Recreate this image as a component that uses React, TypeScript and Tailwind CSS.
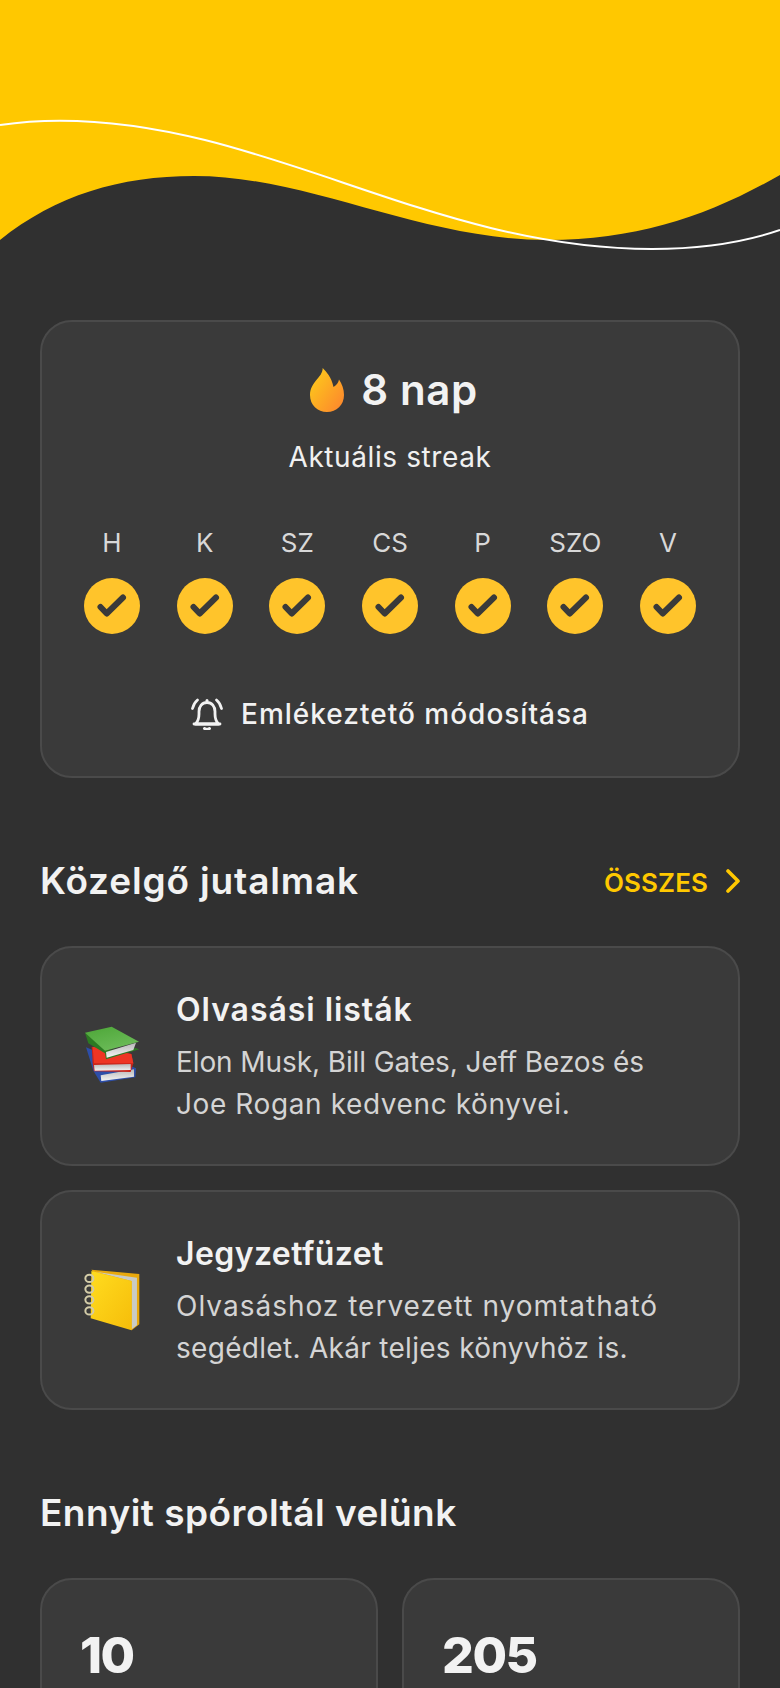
import React from "react";

const days = ["H", "K", "SZ", "CS", "P", "SZO", "V"];
const cardClass = "rounded-[32px] border-2 border-[#4a4a4a] bg-[#3a3a3a]";

function Wave() {
  return (
    <svg className="block h-[320px] w-[780px]" viewBox="0 0 780 320">
      <path d="M0 240C56 195 120 176 194 176C310 176 420 240 547 240C640 240 710 215 780 175L780 0L0 0Z" fill="#ffc800" />
      <path d="M0 125C20 122 40 120.7 60 120.7C265 120.7 430 249 652 249C700 249 745 242 780 230" fill="none" stroke="#ffffff" strokeWidth="2" />
    </svg>
  );
}

function Flame() {
  return (
    <svg width="34" height="44" viewBox="0 0 34 44" className="shrink-0">
      <defs>
        <linearGradient id="fl" x1="0.1" y1="0.2" x2="0.9" y2="0.9">
          <stop offset="0" stopColor="#fdc51c" />
          <stop offset="1" stopColor="#fd8a2c" />
        </linearGradient>
      </defs>
      <path d="M12.700 0C16 3.500 21.500 9 23.500 19C26.500 17 28.500 14.500 29 11.500C32 16 34 21 34 27C34 37 26.500 44 17 44C7.500 44 0 37 0 27C0 20 3.500 16 6 12.500C9.500 8.500 12.700 5 12.700 0Z" fill="url(#fl)" />
    </svg>
  );
}

function Check() {
  return (
    <div className="flex h-14 w-14 items-center justify-center rounded-full bg-[#ffc42b]">
      <svg width="56" height="56" viewBox="0 0 56 56">
        <path d="M16.500 29L22.700 35.500L39 19.500" fill="none" stroke="#3a3a3a" strokeWidth="6" strokeLinecap="round" strokeLinejoin="round" />
      </svg>
    </div>
  );
}

function Bell() {
  return (
    <svg width="32" height="32" viewBox="0 0 32 32" fill="none" stroke="#f2f2f2" strokeWidth="2.800" strokeLinecap="round" strokeLinejoin="round">
      <path d="M4.500 26C7 23.500 8 20.500 8 16V13.500C8 8.500 11 4.500 16 4.500C21 4.500 24 8.500 24 13.500V16C24 20.500 25 23.500 27.500 26Z" />
      <path d="M3 26H29" />
      <path d="M1.500 10.500C2.500 6.800 4 4 6.500 2" />
      <path d="M30.500 10.500C29.500 6.800 28 4 25.500 2" />
      <path d="M13.500 30.500C15 31.500 17 31.500 18.500 30.500" strokeWidth="3" />
      <circle cx="16" cy="2.500" r="1.500" fill="#f2f2f2" stroke="none" />
    </svg>
  );
}

function Books() {
  return (
    <svg width="56" height="60" viewBox="72 78 168 180" className="shrink-0">
      <defs>
        <linearGradient id="gr" x1="0.2" y1="0" x2="0.8" y2="1">
          <stop offset="0" stopColor="#4fa83a" />
          <stop offset="1" stopColor="#6fbd5c" />
        </linearGradient>
        <linearGradient id="pg" x1="0" y1="0" x2="0" y2="1">
          <stop offset="0" stopColor="#b8b8b8" />
          <stop offset="1" stopColor="#f4f4f4" />
        </linearGradient>
      </defs>
      <polygon points="78,142 228,205 226,232 122,248 100,212" fill="#2d4ea8" />
      <polygon points="122,226 222,208 222,230 124,243" fill="url(#pg)" />
      <polygon points="95,140 214,162 220,190 212,216 102,214 98,190" fill="#c9241a" />
      <polygon points="98,140 214,162 220,190 102,190" fill="#ee3524" />
      <polygon points="102,195 212,192 212,210 104,212" fill="url(#pg)" />
      <polygon points="85,130 135,160 138,178 238,148 226,144 140,150 75,98" fill="#2c7a22" />
      <polygon points="138,156 228,128 220,150 140,173" fill="url(#pg)" />
      <polygon points="75,98 155,80 237,125 135,152" fill="url(#gr)" />
    </svg>
  );
}

function Notebook() {
  return (
    <svg width="57" height="62" viewBox="70 60 170 185" className="shrink-0">
      <defs>
        <linearGradient id="nb" x1="0" y1="0" x2="1" y2="1">
          <stop offset="0" stopColor="#ffdc1f" />
          <stop offset="1" stopColor="#f6bd0a" />
        </linearGradient>
      </defs>
      <polygon points="92,62 235,75 235,225 212,243" fill="#e9a90d" />
      <polygon points="104,68 228,86 228,228 212,240 212,96" fill="#c9cbc4" />
      <polygon points="92,66 212,96 212,243 90,207" fill="url(#nb)" />
      {[88, 120, 152, 185].map((y) => (
        <ellipse key={y} cx="86" cy={y} rx="12" ry="11" fill="none" stroke="#d3cca8" strokeWidth="6" />
      ))}
    </svg>
  );
}

type Line = { text: string; cls: string };

function Reward({ icon, title, titleCls, lines }: { icon: React.ReactNode; title: string; titleCls: string; lines: Line[] }) {
  return (
    <div className={`flex h-[220px] items-center ${cardClass}`}>
      <div className="flex w-[134px] shrink-0 justify-start pl-[42px]">{icon}</div>
      <div className="pt-[2px]">
        <div className={`mb-[11px] text-[32px] leading-[40px] font-semibold text-[#f2f2f2] ${titleCls}`}>{title}</div>
        {lines.map((l) => (
          <div key={l.text} className={`text-[28px] leading-[42px] text-[#d4d4d4] ${l.cls}`}>{l.text}</div>
        ))}
      </div>
    </div>
  );
}

export default function App() {
  return (
    <div className="h-[1688px] w-[780px] overflow-hidden bg-[#303030] font-['Inter',sans-serif]">
      <Wave />
      <div className="px-10">
        <section className={`flex h-[458px] flex-col items-center ${cardClass}`}>
          <div className="mt-[42px] ml-[8px] flex h-[52px] items-center gap-[17px]">
            <Flame />
            <span className="text-[42px] leading-[52px] font-semibold tracking-[0.6px] text-[#f2f2f2]">8 nap</span>
          </div>
          <div className="mt-[20px] text-[28px] leading-[42px] tracking-[0.6px] text-[#f0f0f0]">Aktuális streak</div>
          <div className="mt-[47px] flex">
            {days.map((d) => (
              <div key={d} className="flex w-[92.670px] shrink-0 flex-col items-center gap-[17px]">
                <span className="text-[26px] leading-[36px] text-[#d8d8d8]">{d}</span>
                <Check />
              </div>
            ))}
          </div>
          <div className="mt-[59px] flex items-center gap-[18px]">
            <Bell />
            <span className="text-[28px] leading-[42px] font-medium tracking-[1px] text-[#f2f2f2]">Emlékeztető módosítása</span>
          </div>
        </section>

        <div className="mt-[78px] flex h-[50px] items-center justify-between">
          <h2 className="text-[37px] leading-[50px] font-semibold tracking-[0.85px] text-[#f2f2f2]">Közelgő jutalmak</h2>
          <div className="flex items-center gap-[18px]">
            <span className="pt-[3px] text-[26px] leading-[36px] font-semibold tracking-[0.1px] text-[#ffc800]">ÖSSZES</span>
            <svg width="14" height="24" viewBox="0 0 14 24" fill="none" stroke="#ffc800" strokeWidth="3.600" strokeLinecap="round" strokeLinejoin="round">
              <path d="M2 2L12 12L2 22" />
            </svg>
          </div>
        </div>

        <div className="mt-[40px] flex flex-col gap-[24px]">
          <Reward
            icon={<Books />}
            title="Olvasási listák"
            titleCls="tracking-[0.95px]"
            lines={[
              { text: "Elon Musk, Bill Gates, Jeff Bezos és", cls: "tracking-[-0.1px]" },
              { text: "Joe Rogan kedvenc könyvei.", cls: "tracking-[0.6px]" },
            ]}
          />
          <Reward
            icon={<Notebook />}
            title="Jegyzetfüzet"
            titleCls="tracking-[0.4px]"
            lines={[
              { text: "Olvasáshoz tervezett nyomtatható", cls: "tracking-[1px]" },
              { text: "segédlet. Akár teljes könyvhöz is.", cls: "tracking-[0.3px]" },
            ]}
          />
        </div>

        <h2 className="mt-[78px] text-[37px] leading-[50px] font-semibold tracking-[0.47px] text-[#f2f2f2]">Ennyit spóroltál velünk</h2>

        <div className="mt-[40px] grid grid-cols-2 gap-6">
          {["10", "205"].map((n) => (
            <div key={n} className={`h-[200px] px-[38px] pt-[45px] ${cardClass}`}>
              <div className="text-[50px] leading-[60px] font-extrabold tracking-[-1.5px] text-[#f2f2f2]">{n}</div>
            </div>
          ))}
        </div>
      </div>
    </div>
  );
}
